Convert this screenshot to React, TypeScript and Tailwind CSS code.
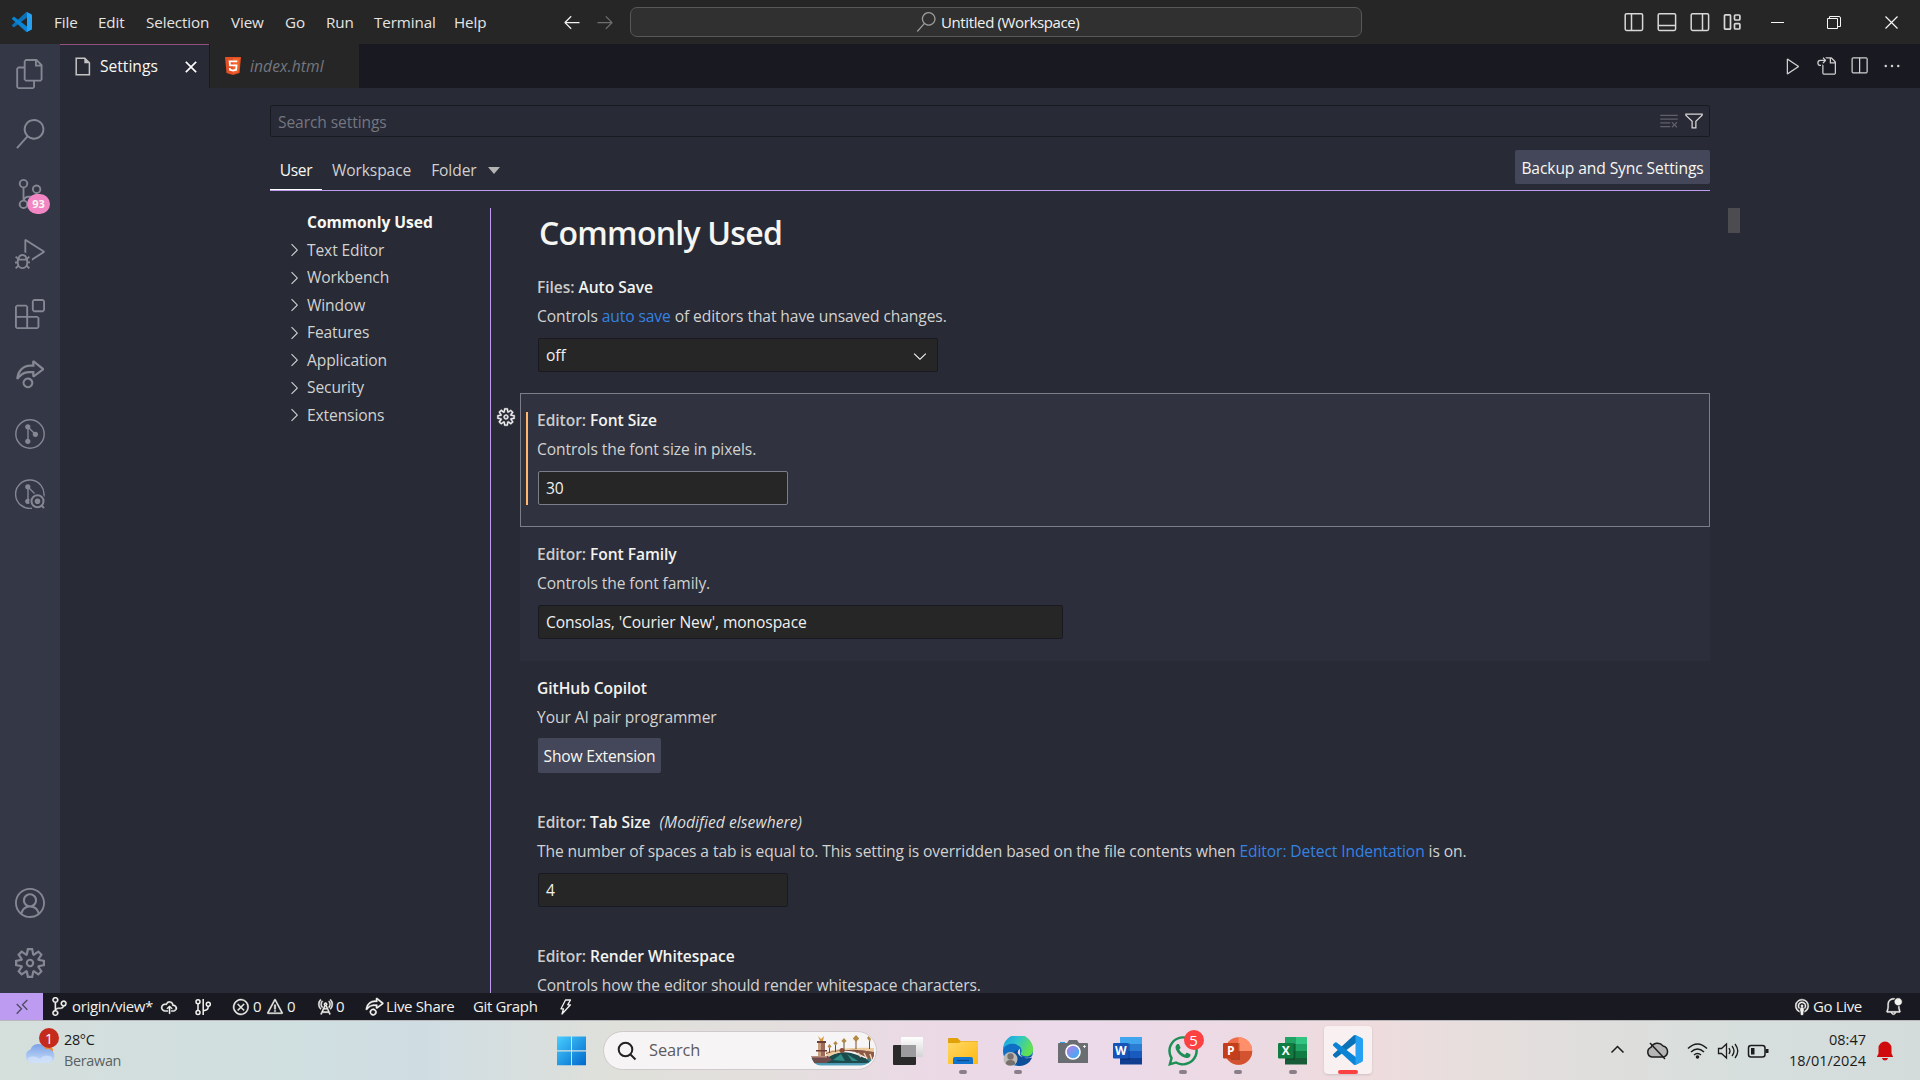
import React from "react";
import {
  VscFiles, VscSearch, VscSourceControl, VscDebugAlt, VscExtensions, VscLiveShare, VscAccount, VscSettingsGear,
  VscArrowLeft, VscArrowRight, VscPlay, VscGoToFile, VscSplitHorizontal, VscEllipsis, VscClearAll, VscFilter,
  VscCloudUpload, VscError, VscWarning, VscRadioTower, VscBroadcast, VscBellDot, VscChevronDown,
  VscChevronRight, VscClose, VscGear,
} from "react-icons/vsc";
import { FaWhatsapp } from "react-icons/fa";

const menu: [string, string][] = [
  ["File", "w-[44px]"], ["Edit", "w-[48px]"], ["Selection", "w-[85px]"], ["View", "w-[54px]"],
  ["Go", "w-[41px]"], ["Run", "w-[48px]"], ["Terminal", "w-[80px]"], ["Help", "w-[108px]"],
];

function VsCodeLogo({ className }: { className: string }) {
  return (
    <svg viewBox="0 0 100 100" className={className}>
      <path fill="#0a72b8" d="M96.46 10.8 75.86.88a6.2 6.2 0 0 0-7.11 1.2L1.3 63.59a4.17 4.17 0 0 0 0 6.16l5.51 5a4.17 4.17 0 0 0 5.32.24L93.36 13.37A4.14 4.14 0 0 1 100 16.67v-.24a6.25 6.25 0 0 0-3.54-5.63Z" />
      <path fill="#0b84d6" d="m96.46 89.2-20.6 9.92a6.2 6.2 0 0 1-7.11-1.2L1.3 36.42a4.17 4.17 0 0 1 0-6.16l5.51-5.01a4.17 4.17 0 0 1 5.32-.24l81.23 61.62A4.14 4.14 0 0 0 100 83.33v.24a6.25 6.25 0 0 1-3.54 5.63Z" />
      <path fill="#26a0f2" d="M75.86 99.13a6.2 6.2 0 0 1-7.11-1.21c2.3 2.3 6.25.67 6.25-2.59V4.67c0-3.26-3.94-4.9-6.25-2.59a6.2 6.2 0 0 1 7.11-1.2l20.6 9.9a6.25 6.25 0 0 1 3.54 5.63v67.18c0 2.4-1.38 4.59-3.54 5.63l-20.6 9.91Z" />
    </svg>
  );
}

function LayoutIcon({ kind }: { kind: "left" | "bottom" | "right" | "custom" }) {
  return (
    <svg viewBox="0 0 20 20" className="size-5 shrink-0" fill="none" stroke="#d8d8d8" strokeWidth="1.5">
      {kind !== "custom" && <rect x="1.2" y="1.7" width="17.4" height="16.8" rx="1.4" />}
      {kind === "left" && <path d="M7.5 2v16.5" />}
      {kind === "right" && <path d="M12.5 2v16.5" />}
      {kind === "bottom" && <path d="M1.5 13.5h17" />}
      {kind === "custom" && (
        <g strokeWidth="1.7">
          <rect x="1.5" y="2.8" width="6" height="14.4" rx="1" />
          <rect x="11.5" y="3" width="5.4" height="5" rx="1" />
          <rect x="11.5" y="11.6" width="5.4" height="5.4" rx="1" />
        </g>
      )}
    </svg>
  );
}

function TitleBar() {
  return (
    <header className="flex h-11 shrink-0 items-center bg-[#262626] text-[15.2px] text-[#e4e4e4]">
      <VsCodeLogo className="ml-3 mr-[22px] size-5" />
      {menu.map(([label, w]) => (
        <span key={label} className={`${w} tracking-[-0.1px]`}>{label}</span>
      ))}
      <VscArrowLeft className="size-5 text-[#f0f0f0]" />
      <VscArrowRight className="ml-[13px] size-5 text-[#6f6f6f]" />
      <div className="ml-[15px] flex h-[30px] w-[732px] items-center rounded-[7px] border border-[#585858] bg-[#303030] pl-[285px]">
        <VscSearch className="size-5 text-[#9b9b9b]" />
        <span className="ml-[5px] text-[15px] tracking-[-0.38px] text-[#f2f2f2]">Untitled (Workspace)</span>
      </div>
      <div className="ml-[262px] flex gap-[13px]">
        <LayoutIcon kind="left" />
        <LayoutIcon kind="bottom" />
        <LayoutIcon kind="right" />
        <LayoutIcon kind="custom" />
      </div>
      <svg viewBox="0 0 128 14" className="ml-[28px] h-[14px] w-[128px]" fill="none" stroke="#f5f5f5" strokeWidth="1">
        <path d="M0 7.5h13" />
        <path d="M56.5 3.5h10v10h-10zM58.5 3.5v-2h9.5q1.5 0 1.5 1.5v8.5h-3" />
        <path d="m114.5 1.5 12 12m0-12-12 12" strokeWidth="1.2" />
      </svg>
    </header>
  );
}

function GraphCircle({ inspect }: { inspect?: boolean }) {
  return (
    <svg viewBox="0 0 30 30" className="size-[30px]" fill="none" stroke="currentColor" strokeWidth="1.4">
      {inspect ? <path d="M28.7 18A14.2 14.2 0 1 0 17 29.2" /> : <circle cx="15" cy="15" r="14.2" />}
      <path d="M13 8v14M13.5 8.5l6.5 6.5" />
      <circle cx="12.8" cy="7.8" r="2.6" fill="currentColor" stroke="none" />
      <circle cx="12.8" cy="22.3" r="2.6" fill="currentColor" stroke="none" />
      {inspect ? (
        <g>
          <circle cx="22.5" cy="22.3" r="8.2" fill="#343746" stroke="none" />
          <circle cx="22.5" cy="22.3" r="6" strokeWidth="2" />
          <circle cx="22.5" cy="22.3" r="2.8" fill="currentColor" stroke="none" />
          <path d="m26 26 3 3" strokeWidth="2" />
        </g>
      ) : (
        <circle cx="20.4" cy="15.3" r="2.6" fill="currentColor" stroke="none" />
      )}
    </svg>
  );
}

function ActivityBar() {
  const cell = "flex h-[60px] w-full items-center justify-center";
  return (
    <nav className="flex w-[60px] shrink-0 flex-col bg-[#343746] text-[#858792]">
      <div className={cell}><VscFiles className="size-[30px]" /></div>
      <div className={cell}><VscSearch className="size-[30px]" /></div>
      <div className={`${cell} relative`}>
        <VscSourceControl className="size-[30px]" />
        <span className="absolute left-[27px] top-[30px] flex h-5 w-[23px] items-center justify-center rounded-full bg-[#f286c4] text-[11px] font-bold text-[#f8f8f2]">93</span>
      </div>
      <div className={cell}><VscDebugAlt className="size-[30px]" /></div>
      <div className={cell}><VscExtensions className="size-[30px]" /></div>
      <div className={cell}><VscLiveShare className="size-[30px]" /></div>
      <div className={cell}><GraphCircle /></div>
      <div className={cell}><GraphCircle inspect /></div>
      <div className={`${cell} mt-auto`}><VscAccount className="size-[30px]" /></div>
      <div className={cell}><VscSettingsGear className="size-[30px]" /></div>
    </nav>
  );
}

function TabBar() {
  return (
    <div className="flex h-11 shrink-0 items-center bg-[#191a21] text-[15.6px]">
      <div className="flex h-full w-[149px] items-center border-t border-[#944f7e] bg-[#282a36] pl-[15px]">
        <svg viewBox="0 0 16 19" className="h-[19px] w-4" fill="none" stroke="#c5c5c5" strokeWidth="1.5">
          <path d="M1.2 1.2h8.6l4.6 4.6v12H1.2z" />
          <path d="M9.3 1v5.2h5.2z" fill="#c5c5c5" stroke="none" />
        </svg>
        <span className="ml-[9px] w-[81px] text-[#f8f8f2]">Settings</span>
        <VscClose className="size-5 text-white" strokeWidth="0.4" />
      </div>
      <div className="ml-px flex h-full w-[149px] items-center bg-[#262626] pl-[15px]">
        <svg viewBox="0 0 16 18" className="h-[18px] w-4">
          <path fill="#e44f26" d="M0 0h16l-1.5 16L8 18l-6.5-2z" />
          <path fill="#f1662a" d="M8 1.3h6.6l-1.2 13.7L8 16.6z" />
          <path fill="none" stroke="#fff" strokeWidth="1.8" d="M12.3 4.4H4.6l.4 4h6.5l-.4 4.3L8 13.6l-3-.9-.2-1.7" />
        </svg>
        <span className="ml-[9px] pt-[2px] italic tracking-[0.1px] text-[#747680]">index.html</span>
      </div>
      <div className="ml-auto mr-[18px] flex items-center gap-[13px] text-[#d0d0d0]">
        <VscPlay className="size-5" />
        <VscGoToFile className="size-5" />
        <VscSplitHorizontal className="size-5" />
        <VscEllipsis className="size-5" />
      </div>
    </div>
  );
}

const toc = ["Text Editor", "Workbench", "Window", "Features", "Application", "Security", "Extensions"];

function Toc() {
  return (
    <div className="w-[221px] shrink-0 border-r border-[#bd9bf0] text-[#d2d2d0]">
      <div className="mt-[1px] flex h-[27.5px] items-center pl-[37px] font-bold tracking-[-0.05px] text-[#f8f8f2]">Commonly Used</div>
      {toc.map((t) => (
        <div key={t} className="flex h-[27.5px] items-center pl-[14px] tracking-[-0.12px]">
          <VscChevronRight className="mr-[3px] size-5" />
          {t}
        </div>
      ))}
    </div>
  );
}

type ItemProps = {
  category?: string;
  name: string;
  note?: string;
  desc: React.ReactNode;
  height?: string;
  tone?: string;
  children?: React.ReactNode;
  modified?: boolean;
};

function Item({ category, name, note, desc, height = "h-[134px]", tone = "border-transparent", children, modified }: ItemProps) {
  return (
    <section className={`relative shrink-0 border pl-[16px] pt-[13px] ${height} ${tone}`}>
      {modified && <span className="absolute left-[5px] top-[18px] h-[93px] w-[2px] bg-[#ffb86c]" />}
      {modified && <VscGear className="absolute -left-[25px] top-[13px] size-5 text-[#f0f0f0]" strokeWidth="0.3" />}
      <div className="flex h-[28px] items-center whitespace-pre font-semibold tracking-[-0.06px] text-[#f3f3ef]">
        {category && <span className="text-[#cbcbca]">{category}: </span>}
        {name}
        {note && <span className="ml-[9px] font-normal italic tracking-[0.06px] text-[#dededb]">{note}</span>}
      </div>
      <div className="h-[28px] whitespace-pre leading-[28px] tracking-[-0.09px] text-[#d2d2d1]">{desc}</div>
      {children}
    </section>
  );
}

function Field({ className, children }: { className: string; children: React.ReactNode }) {
  return (
    <div className={`ml-px mt-[8px] flex h-[34px] items-center rounded-[2px] border bg-[#262626] pl-[7px] pt-[2px] tracking-[-0.1px] text-[#f0f0f0] ${className}`}>{children}</div>
  );
}

function Settings() {
  return (
    <main className="flex min-h-0 flex-1 flex-col bg-[#282a36] pl-[210px] text-[15.6px]">
      <div className="mt-[17px] flex h-8 w-[1440px] shrink-0 items-center rounded-[2px] border border-[#191a21] pl-[7px] pr-[5px] text-[#747680]">
        <span className="pt-[4px] tracking-[-0.1px]">Search settings</span>
        <VscClearAll className="ml-auto mr-[5px] size-5 text-[#5f606a]" />
        <VscFilter className="size-5 text-[#d8d8d8]" />
      </div>
      <div className="flex h-[54px] w-[1440px] shrink-0 items-end border-b border-[#bd9bf0] text-[#d0d0cf]">
        <div className="flex h-[37px] w-[52px] items-center justify-center border-b border-white tracking-[-0.3px] text-[#f8f8f2]">User</div>
        <div className="flex h-[37px] items-center pb-px pl-[10px] tracking-[-0.12px]">Workspace</div>
        <div className="flex h-[37px] items-center pb-px pl-5 tracking-[-0.1px]">Folder</div>
        <svg viewBox="0 0 12 7" className="mb-[16px] ml-[11px] h-[7px] w-3"><path d="M0 0h12L6 7z" fill="#b4b4b4" /></svg>
        <div className="mb-[6px] ml-auto flex h-[34px] w-[195px] items-center justify-center rounded-[2px] bg-[#44475a] pt-[4px] tracking-[-0.1px] text-[#f8f8f2]">Backup and Sync Settings</div>
      </div>
      <div className="mt-[17px] flex min-h-0 flex-1 overflow-hidden">
        <Toc />
        <div className="ml-[29px] flex w-[1190px] flex-col">
          <h1 className="h-[52px] shrink-0 pl-[19px] text-[32px] font-semibold leading-[49px] tracking-[-0.75px] text-[#f5f5f1]">Commonly Used</h1>
          <Item category="Files" name="Auto Save" height="h-[133px]" desc={<>Controls <span className="text-[#3582e0]">auto save</span> of editors that have unsaved changes.</>}>
            <Field className="w-[400px] border-[#191a21]">
              off
              <VscChevronDown className="ml-auto mr-[7px] size-5" />
            </Field>
          </Item>
          <Item modified category="Editor" name="Font Size" tone="border-[#7b7d88] bg-[#30323f]" desc="Controls the font size in pixels.">
            <Field className="w-[250px] border-[#7b7d88]">30</Field>
          </Item>
          <Item category="Editor" name="Font Family" tone="border-transparent bg-[#2c2e3b]" desc="Controls the font family.">
            <Field className="w-[525px] border-[#191a21]">Consolas, 'Courier New', monospace</Field>
          </Item>
          <Item name="GitHub Copilot" desc="Your AI pair programmer">
            <div className="ml-px mt-[7px] flex h-[35px] w-[123px] items-center justify-center rounded-[2px] bg-[#44475a] pt-[2px] tracking-[-0.2px] text-[#f8f8f2]">Show Extension</div>
          </Item>
          <Item category="Editor" name="Tab Size" note="(Modified elsewhere)" desc={<>The number of spaces a tab is equal to. This setting is overridden based on the file contents when <span className="text-[#3582e0]">Editor: Detect Indentation</span> is on.</>}>
            <Field className="w-[250px] border-[#191a21]">4</Field>
          </Item>
          <Item category="Editor" name="Render Whitespace" desc="Controls how the editor should render whitespace characters." />
        </div>
        <div className="ml-[18px] h-[25px] w-3 bg-[#4b4b50]" />
      </div>
    </main>
  );
}

function GitGraphIcon() {
  return (
    <svg viewBox="0 0 18 18" className="size-[18px]" fill="none" stroke="currentColor" strokeWidth="1.5">
      <circle cx="4" cy="3.8" r="2" /><circle cx="4" cy="14.4" r="2" /><circle cx="14.3" cy="6.2" r="2" />
      <path d="M4 5.8v6.6M9.200 1v16M14.300 8.200c0 3.500-2 4-5.100 4.500" />
    </svg>
  );
}

function StatusBar() {
  return (
    <footer className="flex h-[27px] shrink-0 items-center bg-[#191a21] text-[15px] tracking-[-0.35px] text-[#f2f2ee]">
      <div className="flex h-full w-[43px] items-center justify-center bg-[#bd9bf0] text-[#4b4a63]">
        <svg viewBox="0 0 12 16" className="h-4 w-3" fill="none" stroke="currentColor" strokeWidth="1.3"><path d="m.7 5 4.800 4.800-4.800 5M11.300 1 6.500 5.800l4.800 5" /></svg>
      </div>
      <VscSourceControl className="ml-[7px] size-[19px]" strokeWidth="0.5" />
      <span className="ml-[3px] w-[88px]">origin/view*</span>
      <VscCloudUpload className="size-[18px]" strokeWidth="0.4" />
      <div className="ml-4"><GitGraphIcon /></div>
      <VscError className="ml-[20px] size-[18px]" strokeWidth="0.4" />
      <span className="ml-[3px] w-[13px]">0</span>
      <VscWarning className="size-[18px]" strokeWidth="0.4" />
      <span className="ml-[3px] w-[29px]">0</span>
      <VscRadioTower className="size-[18px]" strokeWidth="0.4" />
      <span className="ml-[2px] w-[29px]">0</span>
      <VscLiveShare className="size-[19px]" strokeWidth="0.4" />
      <span className="ml-[2px] w-[87px]">Live Share</span>
      <span className="w-[83px]">Git Graph</span>
      <svg viewBox="0 0 18 18" className="size-[18px]" fill="none" stroke="currentColor" strokeWidth="1.3" strokeLinejoin="round">
        <path d="M9.500 2h5l-2.800 4.800h2.800L6 16l1.500-5.200H5z" />
      </svg>
      <VscBroadcast className="ml-auto size-[18px]" strokeWidth="0.4" />
      <span className="ml-[2px] w-[71px]">Go Live</span>
      <VscBellDot className="mr-[17px] size-[19px]" strokeWidth="0.3" />
    </footer>
  );
}

function AppCell({ children, mark }: { children: React.ReactNode; mark?: boolean }) {
  return (
    <div className="flex h-full w-[55px] flex-col items-center pt-[15px]">
      <div className="relative size-[30px]">{children}</div>
      {mark && <span className="mt-[4px] h-1 w-2 rounded-full bg-[#8a7f88]" />}
    </div>
  );
}

function OfficeIcon({ letter, colors, round }: { letter: string; colors: string[]; round?: boolean }) {
  return (
    <svg viewBox="0 0 30 30" className="size-[30px]">
      {round ? (
        <g>
          <circle cx="15.5" cy="15" r="13.7" fill={colors[0]} />
          <path d="M15.5 1.3A13.7 13.7 0 0 1 29.2 15H15.5z" fill={colors[1]} />
          <path d="M1.8 15h27.4a13.7 13.7 0 0 1-27.4 0" fill={colors[2]} />
        </g>
      ) : letter === "X" ? (
        <g>
          <path d="M7 1h11v7H7z" fill={colors[0]} /><path d="M18 1h11v7H18z" fill="#33c481" />
          <path d="M7 8h11v7H7z" fill="#107c41" /><path d="M18 8h11v7H18z" fill={colors[1]} />
          <path d="M7 15h11v7H7z" fill="#0f6b37" /><path d="M18 15h11v7H18z" fill={colors[2]} /><path d="M7 22h22v6.5H7z" fill={colors[3]} />
        </g>
      ) : (
        <g>
          <path d="M7 1h22v7H7z" fill={colors[0]} /><path d="M7 8h22v7H7z" fill={colors[1]} />
          <path d="M7 15h22v7H7z" fill={colors[2]} /><path d="M7 22h22v6.5H7z" fill={colors[3]} />
        </g>
      )}
      <path d="M8 7h9v17H8z" fill="#000" opacity=".18" />
      <rect x="0" y="7" width="15.5" height="15.5" rx="1.2" fill={colors[4]} />
      <text x="7.7" y="18.9" textAnchor="middle" fontSize="12" fontWeight="bold" fill="#fff" fontFamily="Open Sans">{letter}</text>
    </svg>
  );
}

function Bridge() {
  return (
    <svg viewBox="0 0 64 31" className="h-[31px] w-[64px]">
      <defs>
        <linearGradient id="bw" x1="0" y1="0" x2="0" y2="1"><stop offset="0" stopColor="#2b7d86" /><stop offset="1" stopColor="#5aa6c4" /></linearGradient>
        <clipPath id="bc"><path d="M5 20H0q1 10 10 10.500h40q10-1 13-10V0H5z" /></clipPath>
      </defs>
      <g clipPath="url(#bc)">
        <path d="M0 23h64v8H0z" fill="url(#bw)" />
        <path d="M14 24q12-9 26-6 12 3 19 9l-4 1H16z" fill="#1d4a4d" />
        <path d="M22 25l8-6 4 7zm14-6 5 7h6z" fill="#2f8c85" />
        <path d="M15 17q16-5 48-4v5q-12-3-25-2-14 1-22 7z" fill="#eccb9f" />
        <path d="M15 19q10-4 23-3 14 1 25 9v-7q-12-4-25-3-14 0-23 3z" fill="#7d4a3d" />
        <path d="m44 17 19 9v-9q-9-2-19 0" fill="#8d5a48" />
        <path d="M47 18l3 4m3-4 3 6m3-5 2 6" stroke="#ecd3b2" strokeWidth="1.5" />
        <path d="M7 8h7v14H7z" fill="#9c6a5c" /><path d="M7 8h3v14H7z" fill="#caa07f" /><path d="M6 6h9v2H6zM5 15h11v1.500H5z" fill="#6b3e3a" />
        <path d="M0 21h17l4 4-6 3H3z" fill="#6f4b4b" /><path d="M0 21h16v1.500H0z" fill="#b98d7c" />
        <circle cx="31" cy="15.5" r="2.5" fill="#8a4c3a" />
      </g>
      <path d="m7 1 3 3 3-3-1 5H9z" fill="#d79a3e" />
      <g stroke="#6d4c33" strokeWidth="1"><path d="M18.500 10v8M24.500 8v9M33 5v11M45 2v12M58.500 3v11" /></g>
      <g fill="#b28a43"><path d="m18.500 9 2 2.500-2 2-2-2zM24.500 6l2.200 2.500-2.200 2-2.200-2zM33 3l2.600 3L33 8.500 30.400 6zM45 0l3.200 3.500L45 7l-3.200-3.500zM57.500 1l2.500 3-1 3-3-4z" /></g>
    </svg>
  );
}

function Taskbar() {
  return (
    <div className="flex h-[60px] shrink-0 items-center border-t border-[#b9b9bb] bg-[linear-gradient(90deg,#d5dfdc_0%,#d0dfe0_15%,#cfdde3_22%,#dfe0da_32%,#e3dfdd_40%,#ecd9e6_49%,#ecd9ea_56%,#ecdae2_66%,#eedcdd_72%,#e6dedd_77%,#dededc_84%,#d6dfdd_91%,#d3dcdb_100%)]">
      <div className="relative ml-[24px] h-full w-[40px]">
        <svg viewBox="0 0 32 40" className="mt-[8px] h-10 w-8">
          <defs><linearGradient id="cl" x1="0" y1="0" x2="0" y2="1"><stop offset="0" stopColor="#7ba2e6" /><stop offset="1" stopColor="#c9ddf9" /></linearGradient></defs>
          <circle cx="23" cy="22" r="6" fill="#f58220" />
          <path d="M8 34a7 7 0 0 1-1.500-13.500 8 8 0 0 1 15-.5A7 7 0 0 1 25 34z" fill="url(#cl)" />
          <path d="M8 34q-5-1-4-5 6-4 12 1 4-6 12-2 1 5-4 6z" fill="#d3e3fa" opacity=".7" />
        </svg>
        <span className="absolute left-[15px] top-[7px] flex size-5 items-center justify-center rounded-full bg-[#c42b1c] text-[14px] text-white">1</span>
      </div>
      <div className="w-[487px] text-[14.4px] leading-[20.5px] tracking-[-0.3px] text-[#1b1b1b]">
        <div>28°C</div>
        <div className="text-[#5b6162]">Berawan</div>
      </div>
      <svg viewBox="0 0 30 30" className="ml-[6px] size-[30px]">
        <defs><linearGradient id="wn" x1="0" y1="0" x2="1" y2="1"><stop offset="0" stopColor="#48ceff" /><stop offset="1" stopColor="#0068cc" /></linearGradient></defs>
        <path fill="url(#wn)" d="M0 .5h14v13.800H0zM15 .5h14v13.800H15zM0 15.500h14v13.800H0zM15 15.500h14v13.800H15z" />
      </svg>
      <div className="ml-[16px] flex h-[39px] w-[274px] items-center rounded-full border border-[#cfc8cd] bg-[#f7f4f6] pl-[13px]">
        <svg viewBox="0 0 20 20" className="size-5" fill="none" stroke="#222" strokeWidth="2"><circle cx="8.5" cy="8.5" r="6.8" /><path d="m13.500 13.500 5 5" /></svg>
        <span className="ml-3 text-[16.4px] tracking-[-0.1px] text-[#5c5a5c]">Search</span>
        <div className="ml-auto mr-[1px]"><Bridge /></div>
      </div>
      <div className="ml-[3px] flex h-full">
        <AppCell>
          <svg viewBox="0 0 30 30" className="size-[30px]"><defs><linearGradient id="tv" x1="0" y1="0" x2="0" y2="1"><stop offset="0" stopColor="#fff" /><stop offset="1" stopColor="#d5d2d5" /></linearGradient></defs><rect y="9" width="23" height="20" rx="1" fill="#2a2a2a" /><rect x="8" y="1" width="22" height="20" rx="1" fill="url(#tv)" /><path d="M8 9h15v12H8z" fill="#9d9b9d" /></svg>
        </AppCell>
        <AppCell mark>
          <svg viewBox="0 0 30 30" className="size-[30px]"><defs><linearGradient id="fd" x1="0" y1="0" x2="1" y2="1"><stop offset="0" stopColor="#ffd866" /><stop offset="1" stopColor="#fdb912" /></linearGradient></defs><path d="M0 3q0-1 1-1h8.500l3 3H29q1 0 1 1v6H0z" fill="#e0a10a" /><path d="M0 7h11l2-1.500h17V28H0z" fill="url(#fd)" /><path d="M5 28v-5q0-2 2-2h16q2 0 2 2v5z" fill="#0f73cf" /><path d="M9 24.500h12" stroke="#0a4b8f" strokeWidth="1.2" /></svg>
        </AppCell>
        <AppCell mark>
          <svg viewBox="0 0 30 30" className="size-[30px]"><defs><linearGradient id="eg" x1="0" y1="0" x2="1" y2=".4"><stop offset="0" stopColor="#1c9be0" /><stop offset=".5" stopColor="#2dc3cf" /><stop offset="1" stopColor="#62e052" /></linearGradient></defs><circle cx="15" cy="15" r="15" fill="#0f6fc4" /><path d="M0 13A15 15 0 0 1 30 14c0 5-4 7-8 6-3-.5-5-1-4-3 1-2 1-5-2-7C10 6 3 8 0 13" fill="url(#eg)" /><path d="M18 14c-2 3-2 5 2 6.500 3 1 6 .5 8-1l1 2.500q-4 8-13 8-8-4-7-11 2-6 9-5" fill="#0c4f9a" /><path d="M17 12.500q-3 2-2 5 3 5.500 12 4l3-2v-2l1 4-3 .3q-8 1.500-11-3" fill="#ecd9ea" /><circle cx="7.5" cy="23" r="7" fill="#bdbab8" /><circle cx="7.5" cy="20.5" r="3.2" fill="#77716e" /><path d="M2.800 28q0-4 4.700-4t4.700 4q-4.700 3-9.400 0" fill="#77716e" /></svg>
        </AppCell>
        <AppCell>
          <svg viewBox="0 0 30 30" className="size-[30px]"><defs><linearGradient id="cm" x1="0" y1="0" x2="1" y2="1"><stop offset="0" stopColor="#b87be8" /><stop offset="1" stopColor="#2fb4f5" /></linearGradient></defs><path d="M2 6h5v4H2z" fill="#2a9fd8" /><path d="M0 8q0-1 1-1h8l2-3h8l2 3h8q1 0 1 1v19H0z" fill="#6a6e72" /><circle cx="15" cy="16" r="7.8" fill="#fff" /><circle cx="15" cy="16" r="6.2" fill="url(#cm)" /><path d="M26.500 9v3M25 10.500h3" stroke="#fff" strokeWidth=".8" /></svg>
        </AppCell>
        <AppCell><OfficeIcon letter="W" colors={["#41a5ee", "#2b7cd3", "#185abd", "#103f91", "#1653b8"]} /></AppCell>
        <AppCell mark>
          <FaWhatsapp className="-ml-[2px] -mt-[2px] size-[34px] text-[#1c8f55]" />
          <span className="absolute -top-[6px] left-[16px] flex size-5 items-center justify-center rounded-full bg-[#fb4141] text-[15px] text-white">5</span>
        </AppCell>
        <AppCell mark><OfficeIcon round letter="P" colors={["#ed6c47", "#ff8f6b", "#d35230", "", "#c43e1c"]} /></AppCell>
        <AppCell mark><OfficeIcon letter="X" colors={["#21a366", "#21a366", "#107c41", "#185c37", "#107c41"]} /></AppCell>
        <div className="ml-[4px] mt-[5px] flex h-[48px] w-[48px] flex-col items-center rounded-[4px] bg-[#f8f0f1] pt-[9px] shadow-sm">
          <VsCodeLogo className="size-[30px]" />
          <span className="mt-[5px] h-1 w-5 shrink-0 rounded-full bg-[#fb4141]" />
        </div>
      </div>
      <svg viewBox="0 0 160 22" className="ml-[238px] h-[22px] w-[160px]" fill="none" stroke="#1c1c1c" strokeWidth="1.5">
        <path d="m1.500 12.500 6-6 6 6" />
        <path d="M43 17a5 5 0 0 1-1-9.600 7 7 0 0 1 12-1.500 5.800 5.800 0 0 1 1 11z" fill="#b5b5b5" transform="translate(-1 0)" />
        <path d="m40 3 15 16" />
        <path d="M78 8.500q9.500-9 19 0M81 12q6.500-6 13 0M84 15q3.500-3 7 0" />
        <circle cx="87.5" cy="17" r="1.8" fill="#1c1c1c" stroke="none" />
        <path d="M108.500 8.500h3l5-4.500v14l-5-4.500h-3zM119 8q2 3 0 6M122 6q4 5 0 10M125 4q5.500 7 0 14" strokeWidth="1.3" />
        <rect x="138.5" y="5.5" width="16.5" height="11.5" rx="2.5" /><path d="M141 8h3.500v6.500H141z" fill="#1c1c1c" stroke="none" /><path d="M157 9v4" strokeWidth="3" />
      </svg>
      <div className="ml-auto w-[90px] text-right text-[14.5px] leading-[20.5px] text-[#1b1b1b]">
        <div>08:47</div>
        <div>18/01/2024</div>
      </div>
      <svg viewBox="0 0 18 20" className="ml-[10px] mr-[26px] h-5 w-[18px]"><path d="M9 .5a6.500 6.500 0 0 0-6.500 6.500v5.500L.8 16h16.400l-1.700-3.500V7A6.500 6.500 0 0 0 9 .5M5.800 17h6.400Q11 19.500 9 19.500T5.800 17" fill="#d00b0b" /></svg>
    </div>
  );
}

export default function App() {
  return (
    <div className="flex h-[1080px] w-[1920px] flex-col overflow-hidden whitespace-nowrap font-['Open_Sans','Noto_Sans',sans-serif]">
      <TitleBar />
      <div className="flex min-h-0 flex-1">
        <ActivityBar />
        <div className="flex min-w-0 flex-1 flex-col">
          <TabBar />
          <Settings />
        </div>
      </div>
      <StatusBar />
      <Taskbar />
    </div>
  );
}
